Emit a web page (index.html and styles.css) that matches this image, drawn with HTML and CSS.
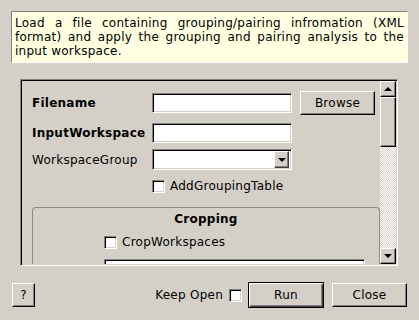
FILE: index.html
```html
<!DOCTYPE html>
<html>
<head>
    <meta charset="UTF-8"/>
    <title>LoadAndApplyMuonDetectorGrouping</title>
    <link rel="stylesheet" href="styles.css">
</head>
<body>
<div class="dialog">
    <div class="description">
        Load a file containing grouping/pairing infromation (XML format) and apply the grouping and pairing analysis to the input workspace.
    </div>

    <div class="scrollarea">
        <div class="viewport">
            <div class="row row-file">
                <span class="label bold">Filename</span>
                <div class="lineedit"></div>
                <div class="button browse">Browse</div>
            </div>
            <div class="row row-input">
                <span class="label bold">InputWorkspace</span>
                <div class="lineedit"></div>
            </div>
            <div class="row row-combo">
                <span class="label">WorkspaceGroup</span>
                <div class="combo">
                    <div class="combo-arrow"><span class="tri-down"></span></div>
                </div>
            </div>
            <div class="row row-check">
                <span class="label"></span>
                <span class="checkbox"></span>
                <span class="check-text">AddGroupingTable</span>
            </div>

            <div class="groupbox">
                <div class="group-title">Cropping</div>
                <div class="group-row group-check">
                    <span class="group-label"></span>
                    <span class="checkbox"></span>
                    <span class="check-text">CropWorkspaces</span>
                </div>
                <div class="group-row group-edit">
                    <span class="group-label"></span>
                    <div class="lineedit wide"></div>
                </div>
            </div>
        </div>
        <div class="scrollbar">
            <div class="sb-button"><span class="tri-up"></span></div>
            <div class="sb-slider"></div>
            <div class="sb-trough"></div>
            <div class="sb-button"><span class="tri-down"></span></div>
        </div>
    </div>

    <div class="buttonbar">
        <div class="button help">?</div>
        <div class="spacer"></div>
        <span class="keep-open">Keep Open</span>
        <span class="checkbox"></span>
        <div class="button default">Run</div>
        <div class="button close">Close</div>
    </div>
</div>
</body>
</html>
```

FILE: styles.css
```css
*{
    margin: 0;
    padding: 0;
    box-sizing: border-box;
}
body{
    width: 419px;
    height: 320px;
    overflow: hidden;
    background: #d4d0c8;
    font-family: "DejaVu Sans", sans-serif;
    font-size: 12px;
    letter-spacing: 0.25px;
    color: #000;
}
.dialog{
    padding: 11px 11px 0 11px;
}
.description{
    height: 52px;
    padding: 4px 3px;
    line-height: 14px;
    text-align: justify;
    background: #ffffe1;
    border: 1px solid;
    border-color: #808080 #ffffff #ffffff #808080;
}

/* scroll area with a sunken frame */
.scrollarea{
    display: flex;
    height: 187px;
    margin: 16px 10px 0 9px;
    border: 1px solid;
    border-color: #808080 #ffffff #ffffff #808080;
    box-shadow: inset 1px 1px #000, inset -1px -1px #d4d0c8;
    padding: 1px;
}
.viewport{
    flex: 1;
    overflow: hidden;
    padding-left: 10px;
}
.row{
    display: flex;
    align-items: center;
}
.row-file{
    height: 24px;
    margin-top: 10px;
}
.row-input{
    height: 20px;
    margin-top: 8px;
}
.row-combo{
    height: 21px;
    margin-top: 6px;
}
.row-check{
    height: 16px;
    margin-top: 8px;
}
.label{
    width: 120px;
    flex-shrink: 0;
}
.bold{
    font-weight: bold;
}
.lineedit{
    width: 140px;
    height: 20px;
    background: #fff;
    border: 1px solid;
    border-color: #808080 #ffffff #ffffff #808080;
    box-shadow: inset 1px 1px #000, inset -1px -1px #d4d0c8;
}
.combo{
    display: flex;
    justify-content: flex-end;
    align-items: center;
    width: 140px;
    height: 21px;
    padding-right: 2px;
    background: #fff;
    border: 1px solid;
    border-color: #808080 #ffffff #ffffff #808080;
    box-shadow: inset 1px 1px #000, inset -1px -1px #d4d0c8;
}
.combo-arrow{
    display: flex;
    align-items: center;
    justify-content: center;
    width: 15px;
    height: 17px;
    background: #d4d0c8;
    border: 1px solid;
    border-color: #ffffff #404040 #404040 #ffffff;
    box-shadow: inset -1px -1px #808080;
}
.checkbox{
    display: inline-block;
    width: 13px;
    height: 13px;
    flex-shrink: 0;
    background: #fff;
    border: 1px solid;
    border-color: #808080 #ffffff #ffffff #808080;
    box-shadow: inset 1px 1px #000, inset -1px -1px #d4d0c8;
}
.check-text{
    margin-left: 5px;
}

.button{
    display: flex;
    align-items: center;
    justify-content: center;
    height: 24px;
    background: #d4d0c8;
    border: 1px solid;
    border-color: #ffffff #000000 #000000 #ffffff;
    box-shadow: inset -1px -1px #808080;
}
.browse{
    width: 75px;
    margin-left: 8px;
}

/* Cropping group */
.groupbox{
    height: 80px;
    margin-top: 13px;
    border: 1px solid #8c8a85;
    border-radius: 4px;
    border-bottom: none;
}
.group-title{
    margin-top: 4px;
    line-height: 14px;
    text-align: center;
    font-weight: bold;
}
.group-row{
    display: flex;
    align-items: center;
}
.group-check{
    height: 16px;
    margin-top: 8px;
}
.group-edit{
    height: 20px;
    margin-top: 9px;
}
.group-label{
    width: 71px;
    padding-left: 9px;
    flex-shrink: 0;
}
.wide{
    width: 261px;
}

/* scrollbar */
.scrollbar{
    display: flex;
    flex-direction: column;
    width: 16px;
}
.sb-button{
    display: flex;
    align-items: center;
    justify-content: center;
    height: 16px;
    background: #d4d0c8;
    border: 1px solid;
    border-color: #ffffff #000000 #000000 #ffffff;
    box-shadow: inset -1px -1px #808080;
}
.sb-slider{
    height: 50px;
    background: #d4d0c8;
    border: 1px solid;
    border-color: #ffffff #000000 #000000 #ffffff;
    box-shadow: inset -1px -1px #808080;
}
.sb-trough{
    flex: 1;
    background: repeating-conic-gradient(#ffffff 0 25%, #d4d0c8 0 50%) 0 0 / 2px 2px;
}
.tri-up{
    width: 0;
    height: 0;
    border-left: 4px solid transparent;
    border-right: 4px solid transparent;
    border-bottom: 4px solid #000;
}
.tri-down{
    width: 0;
    height: 0;
    border-left: 4px solid transparent;
    border-right: 4px solid transparent;
    border-top: 4px solid #000;
}

/* bottom buttons */
.buttonbar{
    display: flex;
    align-items: center;
    height: 26px;
    margin: 16px 1px 0 1px;
}
.help{
    width: 23px;
}
.spacer{
    flex: 1;
}
.keep-open{
    margin-right: 6px;
}
.default{
    width: 76px;
    height: 26px;
    margin-left: 6px;
    border: 1px solid #000;
    box-shadow: inset 1px 1px #fff, inset -1px -1px #404040, inset -2px -2px #808080;
}
.close{
    width: 75px;
    margin-left: 8px;
}
```
